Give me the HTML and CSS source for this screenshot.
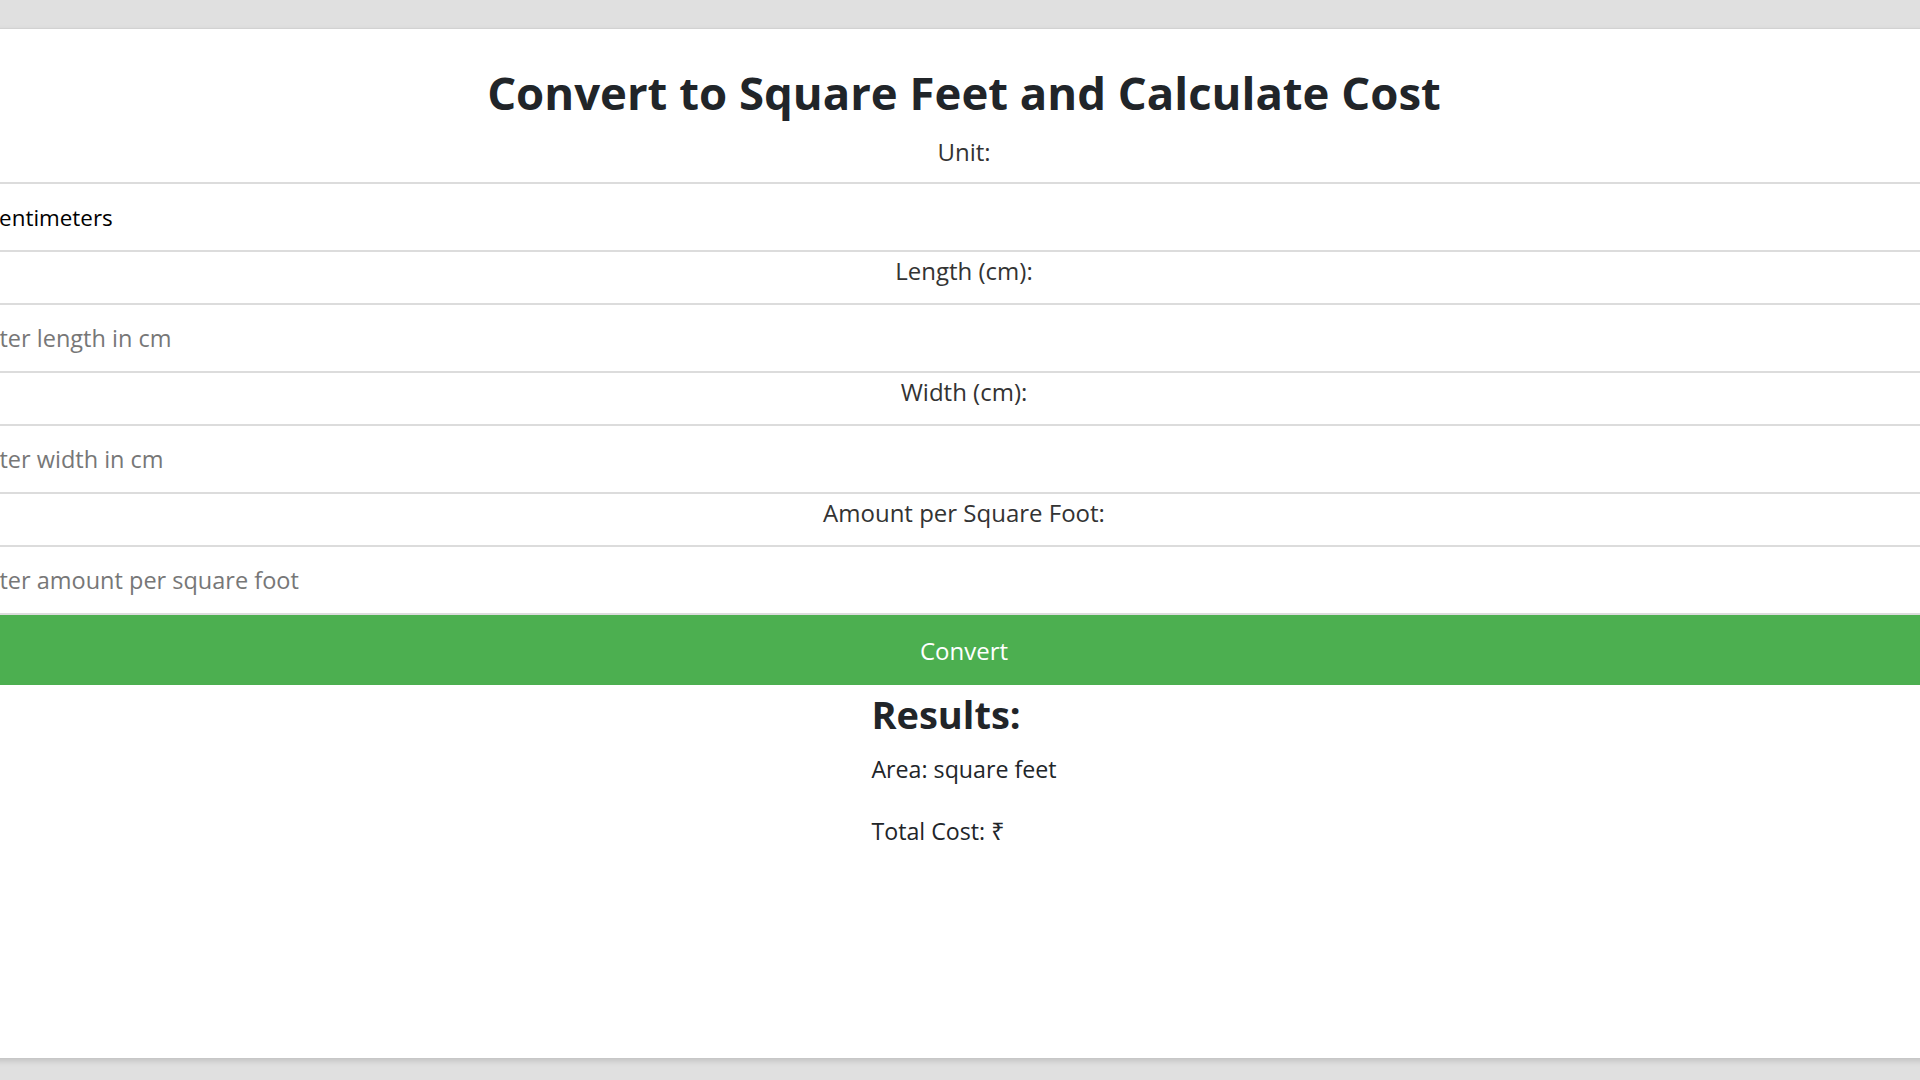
FILE: index.html
```html
<!DOCTYPE html>
<html lang="en">
<head>
<meta charset="utf-8">
<title>Convert to Square Feet and Calculate Cost</title>
<link rel="stylesheet" href="styles.css">
</head>
<body>
<div class="page">
  <h1 class="title">Convert to Square Feet and Calculate Cost</h1>
  <form class="form">
    <label class="label label-first" for="unit">Unit:</label>
    <select class="field field-select" id="unit">
      <option>Centimeters</option>
      <option>Inches</option>
      <option>Meters</option>
    </select>
    <label class="label" for="length">Length (cm):</label>
    <input class="field" id="length" type="number" placeholder="Enter length in cm">
    <label class="label" for="width">Width (cm):</label>
    <input class="field" id="width" type="number" placeholder="Enter width in cm">
    <label class="label" for="amount">Amount per Square Foot:</label>
    <input class="field" id="amount" type="number" placeholder="Enter amount per square foot">
    <button class="btn" type="button">Convert</button>
  </form>
  <div class="results">
    <h2 class="results-title">Results:</h2>
    <p class="results-line">Area: <span></span> square feet</p>
    <p class="results-line">Total Cost: ₹<span></span></p>
  </div>
</div>
</body>
</html>
```
FILE: styles.css
```css
html, body {
  margin: 0;
  padding: 0;
}
body {
  background: #e0e0e0;
  padding-top: 28px;
  overflow: hidden;
  height: 1080px;
  box-sizing: border-box;
  font-family: "Open Sans", "Noto Sans", sans-serif;
}
.page {
  background: #fff;
  border-top: 1px solid #d2d2d2;
  height: 1030px;
  box-sizing: border-box;
  margin: 0 -48px 0 -40px;
  text-align: center;
  box-shadow: 0 3px 6px rgba(0, 0, 0, 0.14);
  padding-top: 34px;
}
.title {
  margin: 0 0 15px;
  font-size: 45.5px;
  line-height: 58px;
  font-weight: 700;
  color: #212529;
}
.form {
  display: flex;
  flex-direction: column;
}
.label {
  display: block;
  font-size: 24px;
  line-height: 32px;
  color: #333;
  margin: 3px 0 16px;
}
.label-first {
  margin: 0 0 14px;
}
.field {
  display: block;
  box-sizing: border-box;
  width: 100%;
  height: 70px;
  margin: 0;
  border: 2px solid #dcdcdc;
  border-left: none;
  border-right: none;
  background: #fff;
  font-family: inherit;
  font-size: 23.5px;
  color: #000;
  padding: 0 12px;
  outline: none;
  -moz-appearance: textfield;
}
.field::placeholder {
  color: #777;
}
.field::-webkit-outer-spin-button,
.field::-webkit-inner-spin-button {
  -webkit-appearance: none;
  margin: 0;
}
.field-select {
  -webkit-appearance: none;
  appearance: none;
  padding-left: 25px;
  font-size: 22.4px;
}
.btn {
  display: block;
  width: 100%;
  height: 70px;
  border: none;
  background: #4caf50;
  color: #fff;
  font-family: inherit;
  font-size: 24px;
  cursor: pointer;
}
.results {
  display: inline-block;
  text-align: left;
  color: #212529;
}
.results-title {
  margin: 5px 0 15px;
  font-size: 38px;
  line-height: 48px;
  font-weight: 700;
}
.results-line {
  margin: 0 0 30px;
  font-size: 23.2px;
  line-height: 32px;
}
```
